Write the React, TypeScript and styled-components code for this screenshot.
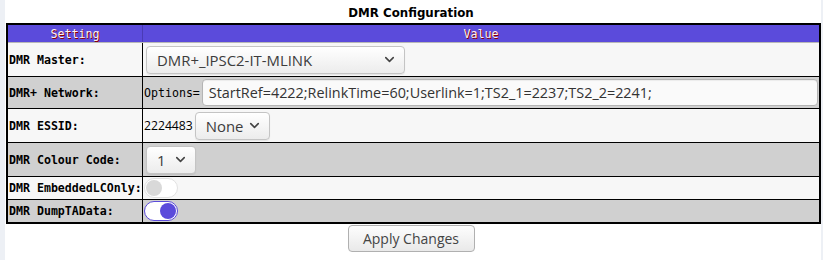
import React from 'react';
import styled, { createGlobalStyle } from 'styled-components';
import { ChevronDown } from 'lucide-react';

const GlobalStyle = createGlobalStyle`
  html, body {
    margin: 0;
    padding: 0;
    background: #edf0f5;
  }
  * {
    box-sizing: border-box;
  }
`;

const Page = styled.div`
  margin-left: 5px;
  width: 816px;
  min-height: 260px;
  background: #ffffff;
`;

const Title = styled.div`
  height: 23px;
  padding: 6px 4px 0 0;
  text-align: center;
  font-family: 'DejaVu Sans', sans-serif;
  font-weight: bold;
  font-size: 11.8px;
  line-height: 15px;
  color: #000;
`;

const ConfigTable = styled.div`
  margin-left: 1px;
  width: 815px;
  border: 2px solid #000;
`;

const Row = styled.div<{ $height: number; $shade?: boolean; $last?: boolean }>`
  display: grid;
  grid-template-columns: 135px 1fr;
  height: ${(p) => p.$height + (p.$last ? 0 : 1)}px;
  background: ${(p) => (p.$shade ? '#d0d0d0' : '#f7f7f7')};
  border-bottom: ${(p) => (p.$last ? 'none' : '1px solid #000')};
`;

const HeadRow = styled.div`
  display: grid;
  grid-template-columns: 135px 1fr;
  height: 18px;
  background: #5b4bdb;
  border-bottom: 1px solid #b8b8b8;
`;

const HeadCell = styled.div<{ $divider?: boolean }>`
  display: flex;
  align-items: center;
  justify-content: center;
  font-family: 'DejaVu Sans Mono', monospace;
  font-size: 11.6px;
  color: #fff0f0;
  text-shadow: 1px 1px #8b0000;
  border-right: ${(p) => (p.$divider ? '1px solid #4a3bb5' : 'none')};
`;

const Label = styled.div`
  display: flex;
  align-items: center;
  padding-left: 1px;
  font-family: 'DejaVu Sans Mono', monospace;
  font-weight: bold;
  font-size: 11.6px;
  color: #000;
  border-right: 1px solid #000;
  white-space: nowrap;
`;

const Value = styled.div`
  display: flex;
  align-items: center;
  padding-left: 1px;
  padding-right: 1px;
  min-width: 0;
`;

const MonoText = styled.span`
  font-family: 'DejaVu Sans Mono', monospace;
  font-size: 11.6px;
  color: #000;
`;

const PlainText = styled.span`
  font-family: 'Open Sans', sans-serif;
  font-size: 12.2px;
  color: #000;
`;

const SelectBox = styled.div<{ $width: number }>`
  display: flex;
  align-items: center;
  justify-content: space-between;
  width: ${(p) => p.$width}px;
  height: 28px;
  margin-left: 2px;
  padding: 0 7px 0 10px;
  border: 1px solid #c4c4c4;
  border-radius: 4px;
  background: linear-gradient(#ffffff, #ececec);
  box-shadow: 0 1px 1px rgba(0, 0, 0, 0.08);
  font-family: 'Open Sans', sans-serif;
  font-size: 14.9px;
  color: #3c3c3c;
  svg {
    flex: none;
    color: #444;
  }
`;

const TextField = styled.div`
  flex: 1;
  display: flex;
  align-items: center;
  height: 27px;
  margin-left: 2px;
  padding-left: 6px;
  border: 1px solid #b4b4b4;
  border-radius: 4px;
  background: #fafafa;
  box-shadow: inset 0 1px 1px rgba(0, 0, 0, 0.06);
  font-family: 'Open Sans', sans-serif;
  font-size: 14.4px;
  color: #333;
  white-space: nowrap;
  overflow: hidden;
`;

const Toggle = styled.div<{ $on?: boolean }>`
  position: relative;
  width: 34px;
  height: 20px;
  border-radius: 10px;
  background: #fff;
  border: 1px solid ${(p) => (p.$on ? '#5b4bdb' : '#e2e2e2')};
  &::after {
    content: '';
    position: absolute;
    top: 1px;
    left: ${(p) => (p.$on ? '15px' : '1px')};
    width: 16px;
    height: 16px;
    border-radius: 50%;
    background: ${(p) => (p.$on ? '#5b4bdb' : '#d9d9d9')};
  }
`;

const Footer = styled.div`
  display: flex;
  justify-content: center;
  padding: 1px 4px 0 0;
`;

const ApplyButton = styled.button`
  width: 127px;
  height: 27px;
  border: 1px solid #b0b0b0;
  border-radius: 4px;
  background: linear-gradient(#fdfdfd, #e9e9e9);
  font-family: 'Open Sans', sans-serif;
  font-size: 14px;
  color: #444;
  padding: 0;
`;

type Option = { label: string; width: number };

function Select({ label, width }: Option) {
  return (
    <SelectBox $width={width}>
      <span>{label}</span>
      <ChevronDown size={15} strokeWidth={2.5} />
    </SelectBox>
  );
}

export default function App() {
  return (
    <>
      <GlobalStyle />
      <Page>
        <Title>DMR Configuration</Title>
        <ConfigTable>
          <HeadRow>
            <HeadCell $divider>Setting</HeadCell>
            <HeadCell>Value</HeadCell>
          </HeadRow>
          <Row $height={33}>
            <Label>DMR Master:</Label>
            <Value>
              <Select label="DMR+_IPSC2-IT-MLINK" width={259} />
            </Value>
          </Row>
          <Row $height={31} $shade>
            <Label>DMR+ Network:</Label>
            <Value>
              <MonoText>Options=</MonoText>
              <TextField>StartRef=4222;RelinkTime=60;Userlink=1;TS2_1=2237;TS2_2=2241;</TextField>
            </Value>
          </Row>
          <Row $height={33}>
            <Label>DMR ESSID:</Label>
            <Value>
              <PlainText>2224483</PlainText>
              <Select label="None" width={75} />
            </Value>
          </Row>
          <Row $height={33} $shade>
            <Label>DMR Colour Code:</Label>
            <Value>
              <Select label="1" width={50} />
            </Value>
          </Row>
          <Row $height={22}>
            <Label>DMR EmbeddedLCOnly:</Label>
            <Value>
              <Toggle />
            </Value>
          </Row>
          <Row $height={22} $shade $last>
            <Label>DMR DumpTAData:</Label>
            <Value>
              <Toggle $on />
            </Value>
          </Row>
        </ConfigTable>
        <Footer>
          <ApplyButton>Apply Changes</ApplyButton>
        </Footer>
      </Page>
    </>
  );
}
